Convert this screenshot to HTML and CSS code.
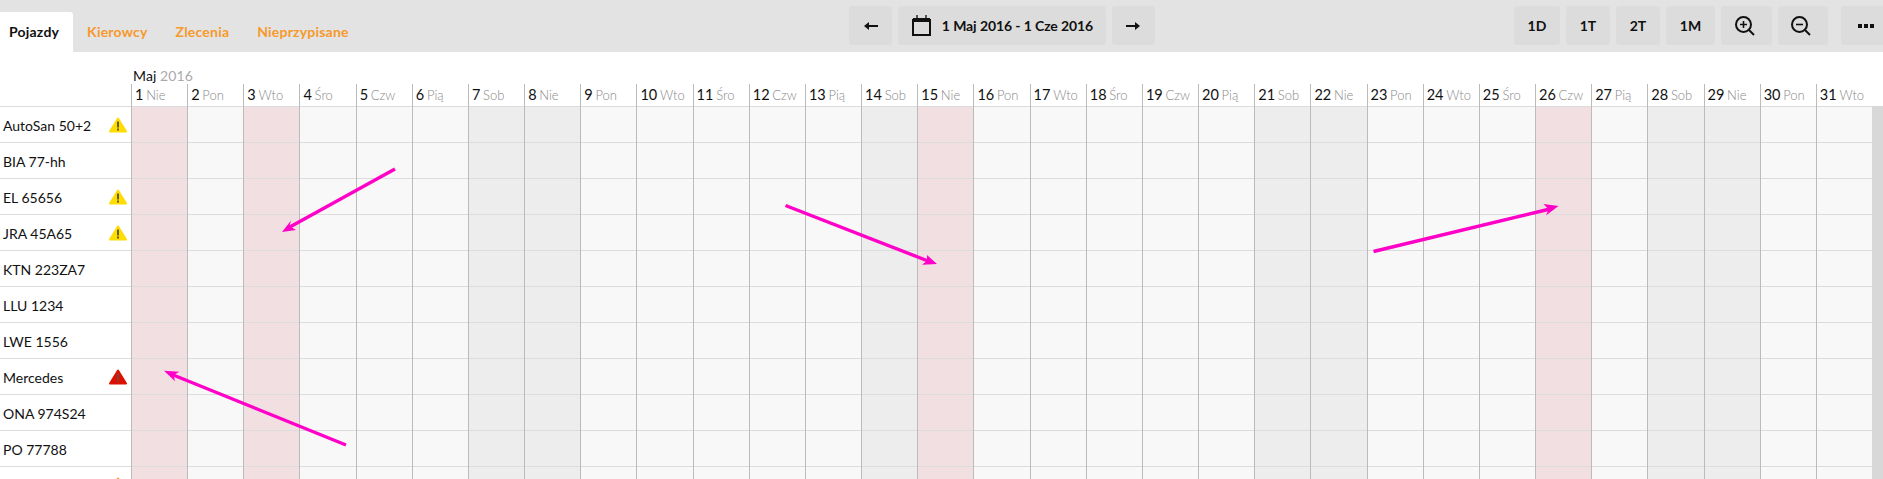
FILE: index.html
```html
<!DOCTYPE html>
<html lang="en">
<head>
    <meta charset="UTF-8">
    <title>Harmonogram</title>
    <link rel="stylesheet" href="styles.css">
</head>
<body>
    <!-- Toolbar -->
    <header class="toolbar">
        <ul class="tabs">
            <li class="tab active">Pojazdy</li>
            <li class="tab">Kierowcy</li>
            <li class="tab">Zlecenia</li>
            <li class="tab">Nieprzypisane</li>
        </ul>
        <div class="range-nav">
            <button class="tool-btn arrow-btn">
                <svg width="15" height="10" viewBox="0 0 15 10"><path d="M15 4v2H6v3L1 5l5-4v3z" fill="#111"/></svg>
            </button>
            <button class="tool-btn date-btn">
                <svg width="19" height="21" viewBox="0 0 19 21"><path d="M1 5h17v15H1z" fill="none" stroke="#111" stroke-width="2"/><path d="M1 3h17v4H1z" fill="#111"/><path d="M5 0v3M14 0v3" stroke="#555" stroke-width="2"/></svg>
                1 Maj 2016 - 1 Cze 2016
            </button>
            <button class="tool-btn arrow-btn">
                <svg width="15" height="10" viewBox="0 0 15 10"><path d="M0 4v2h9v3l5-4-5-4v3z" fill="#111"/></svg>
            </button>
        </div>
        <div class="zoom-nav">
            <button class="tool-btn w46">1D</button>
            <button class="tool-btn w44">1T</button>
            <button class="tool-btn w44">2T</button>
            <button class="tool-btn w49">1M</button>
            <button class="tool-btn icon-btn w51">
                <svg width="20" height="20" viewBox="0 0 20 20"><circle cx="8.500" cy="8.500" r="7.500" fill="none" stroke="#111" stroke-width="2"/><path d="M14 14l5 5" stroke="#111" stroke-width="2"/><path d="M5 8.500h7M8.500 5v7" stroke="#111" stroke-width="1.600"/></svg>
            </button>
            <button class="tool-btn icon-btn w50">
                <svg width="20" height="20" viewBox="0 0 20 20"><circle cx="8.500" cy="8.500" r="7.500" fill="none" stroke="#111" stroke-width="2"/><path d="M14 14l5 5" stroke="#111" stroke-width="2"/><path d="M5 8.500h7" stroke="#111" stroke-width="1.600"/></svg>
            </button>
            <button class="tool-btn more-btn"><span class="dots"></span></button>
        </div>
    </header>

    <!-- Schedule -->
    <section class="schedule">
        <div class="vehicles">
            <div class="vehicle">AutoSan 50+2 <svg class="alert"><use href="#warn-yellow"/></svg></div>
            <div class="vehicle">BIA 77-hh</div>
            <div class="vehicle">EL 65656 <svg class="alert"><use href="#warn-yellow"/></svg></div>
            <div class="vehicle">JRA 45A65 <svg class="alert"><use href="#warn-yellow"/></svg></div>
            <div class="vehicle">KTN 223ZA7</div>
            <div class="vehicle">LLU 1234</div>
            <div class="vehicle">LWE 1556</div>
            <div class="vehicle">Mercedes <svg class="alert"><use href="#warn-red"/></svg></div>
            <div class="vehicle">ONA 974S24</div>
            <div class="vehicle">PO 77788</div>
            <div class="vehicle end"><svg class="alert"><use href="#warn-orange"/></svg></div>
        </div>
        <div class="calendar">
            <div class="month">Maj <span>2016</span></div>
            <div class="days">
                <div class="day holiday"><div class="day-head">1 <span>Nie</span></div></div>
                <div class="day"><div class="day-head">2 <span>Pon</span></div></div>
                <div class="day holiday"><div class="day-head">3 <span>Wto</span></div></div>
                <div class="day"><div class="day-head">4 <span>Śro</span></div></div>
                <div class="day"><div class="day-head">5 <span>Czw</span></div></div>
                <div class="day"><div class="day-head">6 <span>Pią</span></div></div>
                <div class="day weekend"><div class="day-head">7 <span>Sob</span></div></div>
                <div class="day weekend"><div class="day-head">8 <span>Nie</span></div></div>
                <div class="day"><div class="day-head">9 <span>Pon</span></div></div>
                <div class="day"><div class="day-head">10 <span>Wto</span></div></div>
                <div class="day"><div class="day-head">11 <span>Śro</span></div></div>
                <div class="day"><div class="day-head">12 <span>Czw</span></div></div>
                <div class="day"><div class="day-head">13 <span>Pią</span></div></div>
                <div class="day weekend"><div class="day-head">14 <span>Sob</span></div></div>
                <div class="day holiday"><div class="day-head">15 <span>Nie</span></div></div>
                <div class="day"><div class="day-head">16 <span>Pon</span></div></div>
                <div class="day"><div class="day-head">17 <span>Wto</span></div></div>
                <div class="day"><div class="day-head">18 <span>Śro</span></div></div>
                <div class="day"><div class="day-head">19 <span>Czw</span></div></div>
                <div class="day"><div class="day-head">20 <span>Pią</span></div></div>
                <div class="day weekend"><div class="day-head">21 <span>Sob</span></div></div>
                <div class="day weekend"><div class="day-head">22 <span>Nie</span></div></div>
                <div class="day"><div class="day-head">23 <span>Pon</span></div></div>
                <div class="day"><div class="day-head">24 <span>Wto</span></div></div>
                <div class="day"><div class="day-head">25 <span>Śro</span></div></div>
                <div class="day holiday"><div class="day-head">26 <span>Czw</span></div></div>
                <div class="day"><div class="day-head">27 <span>Pią</span></div></div>
                <div class="day weekend"><div class="day-head">28 <span>Sob</span></div></div>
                <div class="day weekend"><div class="day-head">29 <span>Nie</span></div></div>
                <div class="day"><div class="day-head">30 <span>Pon</span></div></div>
                <div class="day"><div class="day-head">31 <span>Wto</span></div></div>
            </div>
        </div>
        <div class="scrollbar"></div>
    </section>

    <!-- Annotation arrows -->
    <svg class="annotations" viewBox="0 0 1883 479">
        <path d="M395 169L288 228"/><path class="head" d="M282 232l9-11.500-1.500 5.500 6.500 4z"/>
        <path d="M785.500 205.500L928 261"/><path class="head" d="M937 264l-10-9 0 5.700-5 4z"/>
        <path d="M1373.500 251.500L1550 209"/><path class="head" d="M1558.500 206l-15-2 5 5.500-2.500 6z"/>
        <path d="M346 445L172 374.500"/><path class="head" d="M164 370.700l15.500 1-6 3.300 1.500 6.300z"/>
    </svg>

    <!-- Alert icons -->
    <svg class="icon-defs">
        <symbol id="warn-yellow" viewBox="0 0 18 16"><path d="M9 1.500L17 14.500H1z" fill="#ffdd00" stroke="#ffdd00" stroke-width="2" stroke-linejoin="round"/><path d="M9 4.500v6M9 11.500v2" stroke="#333" stroke-width="1.500"/></symbol>
        <symbol id="warn-red" viewBox="0 0 18 16"><path d="M9 1.500L17 14.500H1z" fill="#dd1100" stroke="#dd1100" stroke-width="2" stroke-linejoin="round"/><path d="M9 4.500v6M9 11.500v2" stroke="#555" stroke-width="1.500"/></symbol>
        <symbol id="warn-orange" viewBox="0 0 18 16"><path d="M9 1.500L17 14.500H1z" fill="#ff9922" stroke="#ff9922" stroke-width="2" stroke-linejoin="round"/></symbol>
    </svg>
</body>
</html>
```

FILE: styles.css
```css
/* General styles */
html, body {
    height: 479px;
    overflow: hidden;
}

body {
    font-family: 'Lato', sans-serif;
    font-size: 14px;
    background: #fff;
    margin: 0;
    padding: 0;
    color: #111;
    position: relative;
}

/* Toolbar */
.toolbar {
    display: flex;
    height: 52px;
    background: #e3e3e3;
    overflow: hidden;
}

.tabs {
    display: flex;
    flex: none;
    list-style: none;
    margin: 12px 0 0;
    padding: 0;
    width: 849px;
}

.tab {
    height: 40px;
    line-height: 40px;
    padding: 0 14px;
    font-weight: 700;
    font-size: 14px;
    letter-spacing: 0.2px;
    color: #f7992b;
}

.tab.active {
    background: #fff;
    color: #111;
    padding: 0 14px 0 9px;
    border-radius: 0 3px 0 0;
}

.range-nav,
.zoom-nav {
    display: flex;
    flex: none;
    gap: 6px;
    padding-top: 6px;
}

.zoom-nav {
    margin-left: 359px;
}

.tool-btn {
    display: flex;
    align-items: center;
    justify-content: center;
    height: 39px;
    padding: 0;
    border: none;
    border-radius: 3px;
    background: #dcdcdc;
    color: #111;
    font-family: inherit;
    font-size: 14px;
    font-weight: 700;
    flex: none;
}

.arrow-btn { width: 43px; }
.date-btn { width: 208px; gap: 11px; letter-spacing: -0.1px; padding-left: 1px; }
.icon-btn { padding-right: 4px; }
.w44 { width: 44px; }
.w46 { width: 46px; }
.w49 { width: 49px; }
.w50 { width: 50px; }
.w51 { width: 51px; }

.more-btn {
    width: 50px;
    margin-left: 7px;
    justify-content: flex-start;
    padding-left: 17px;
}

.dots {
    width: 4px;
    height: 4px;
    background: #111;
    box-shadow: 6px 0 #111, 12px 0 #111;
}

/* Schedule */
.schedule {
    display: flex;
    height: 427px;
}

.vehicles {
    width: 131px;
    padding-top: 54px;
    flex: none;
}

.vehicle {
    display: flex;
    align-items: center;
    justify-content: space-between;
    box-sizing: border-box;
    height: 36px;
    padding: 1px 4px 0 3px;
    border-top: 1px solid #dcdcdc;
    font-size: 14px;
}

.vehicle.end {
    justify-content: flex-end;
}

.alert {
    width: 18px;
    height: 16px;
}

.calendar {
    flex: 1;
    min-width: 0;
}

.month {
    height: 32px;
    padding: 13px 0 0 2px;
    box-sizing: border-box;
    line-height: 22px;
    font-size: 14px;
    letter-spacing: 0.1px;
}

.month span {
    color: #aaa;
}

.days {
    display: grid;
    grid-template-columns: repeat(31, 1fr);
    height: 395px;
}

.day {
    border-left: 1px solid #bbb;
    background: #f8f8f8;
    background-image: repeating-linear-gradient(to bottom, #dcdcdc 0, #dcdcdc 1px, transparent 1px, transparent 36px);
    background-position: 0 22px;
    background-repeat: no-repeat;
    background-size: 100% 100%;
}

.day.weekend { background-color: #ededed; }
.day.holiday { background-color: #f2dfe2; }

.day-head {
    height: 22px;
    line-height: 22px;
    padding-left: 3px;
    background: #fff;
    white-space: nowrap;
    font-size: 14.500px;
    word-spacing: -1px;
}

.day-head span {
    font-size: 13px;
    font-weight: 300;
    color: #888;
}

.scrollbar {
    width: 11px;
    margin-top: 54px;
    background: #d8d8d8;
    flex: none;
}

/* Arrows */
.annotations {
    position: absolute;
    left: 0;
    top: 0;
    width: 1883px;
    height: 479px;
    pointer-events: none;
}

.annotations path {
    fill: none;
    stroke: #ff00c8;
    stroke-width: 3.400;
}

.annotations .head {
    fill: #ff00c8;
    stroke: none;
}

.icon-defs {
    display: none;
}
```
